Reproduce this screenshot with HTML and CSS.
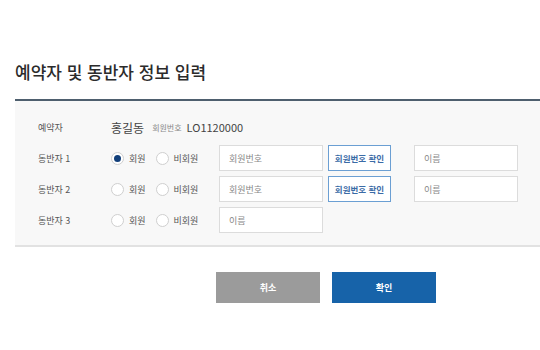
FILE: index.html
```html
<!DOCTYPE html>
<html lang="ko">
<head>
  <meta charset="UTF-8" />
  <title>예약자 및 동반자 정보 입력</title>
  <link rel="stylesheet" href="styles.css">
</head>
<body>

<div class="wrap">
  <h2>예약자 및 동반자 정보 입력</h2>

  <div class="panel">
    <div class="row">
      <span class="label">예약자</span>
      <span class="name">홍길동</span>
      <span class="member-tag">회원번호</span>
      <span class="member-no">LO1120000</span>
    </div>

    <div class="row">
      <span class="label">동반자 1</span>
      <div class="radios">
        <label class="radio"><span class="dot on"></span>회원</label>
        <label class="radio"><span class="dot"></span>비회원</label>
      </div>
      <div class="field">회원번호</div>
      <button class="check">회원번호 확인</button>
      <div class="field name-field">이름</div>
    </div>

    <div class="row">
      <span class="label">동반자 2</span>
      <div class="radios">
        <label class="radio"><span class="dot"></span>회원</label>
        <label class="radio"><span class="dot"></span>비회원</label>
      </div>
      <div class="field">회원번호</div>
      <button class="check">회원번호 확인</button>
      <div class="field name-field">이름</div>
    </div>

    <div class="row">
      <span class="label">동반자 3</span>
      <div class="radios">
        <label class="radio"><span class="dot"></span>회원</label>
        <label class="radio"><span class="dot"></span>비회원</label>
      </div>
      <div class="field">이름</div>
    </div>
  </div>

  <div class="actions">
    <button class="btn cancel">취소</button>
    <button class="btn ok">확인</button>
  </div>
</div>

</body>
</html>
```

FILE: styles.css
```css
* { box-sizing: border-box; }

body {
  margin: 0;
  background: #fff;
  font-family: "Noto Sans CJK KR", "Noto Sans", sans-serif;
  color: #333;
}

.wrap {
  padding: 58px 0 0 15px;
}

h2 {
  margin: 0 0 14px;
  font-size: 17px;
  font-weight: 500;
  line-height: 27px;
  color: #2b2b2b;
}

.panel {
  background: #f8f8f8;
  border-top: 2px solid #4e5f6e;
  border-bottom: 2px solid #e2e2e2;
  padding: 13px 0 12px 23px;
  display: flex;
  flex-direction: column;
  gap: 5px;
}

.row {
  display: flex;
  align-items: center;
  height: 26px;
}

.label {
  width: 73px;
  font-size: 9px;
  color: #555;
}

.name {
  font-size: 12px;
  color: #444;
  margin-right: 8px;
}

.member-tag {
  font-size: 8px;
  color: #888;
  margin-right: 5px;
}

.member-no {
  font-size: 11px;
  color: #444;
}

.radios {
  display: flex;
  width: 108px;
}

.radio {
  display: flex;
  align-items: center;
  font-size: 9px;
  color: #555;
  margin-right: 10px;
}

.dot {
  width: 13px;
  height: 13px;
  border: 1px solid #cfcfcf;
  border-radius: 50%;
  background: #fff;
  margin-right: 5px;
  display: flex;
  align-items: center;
  justify-content: center;
}

.dot.on::after {
  content: "";
  width: 7px;
  height: 7px;
  border-radius: 50%;
  background: #123f7a;
}

.field {
  width: 104px;
  height: 26px;
  border: 1px solid #dcdcdc;
  background: #fff;
  font-size: 9px;
  color: #888;
  padding-left: 9px;
  display: flex;
  align-items: center;
}

.check {
  width: 63px;
  height: 26px;
  margin-left: 5px;
  border: 1px solid #6b9fd3;
  background: #fff;
  color: #3a6ba6;
  font-family: inherit;
  font-size: 8.5px;
  font-weight: 700;
  padding: 0;
}

.name-field {
  margin-left: 23px;
}

.actions {
  display: flex;
  gap: 12px;
  padding: 25px 0 0 201px;
}

.btn {
  width: 104px;
  height: 31px;
  border: none;
  color: #fff;
  font-family: inherit;
  font-size: 9px;
  font-weight: 700;
}

.cancel { background: #9b9b9b; }
.ok { background: #1763a9; }
```
